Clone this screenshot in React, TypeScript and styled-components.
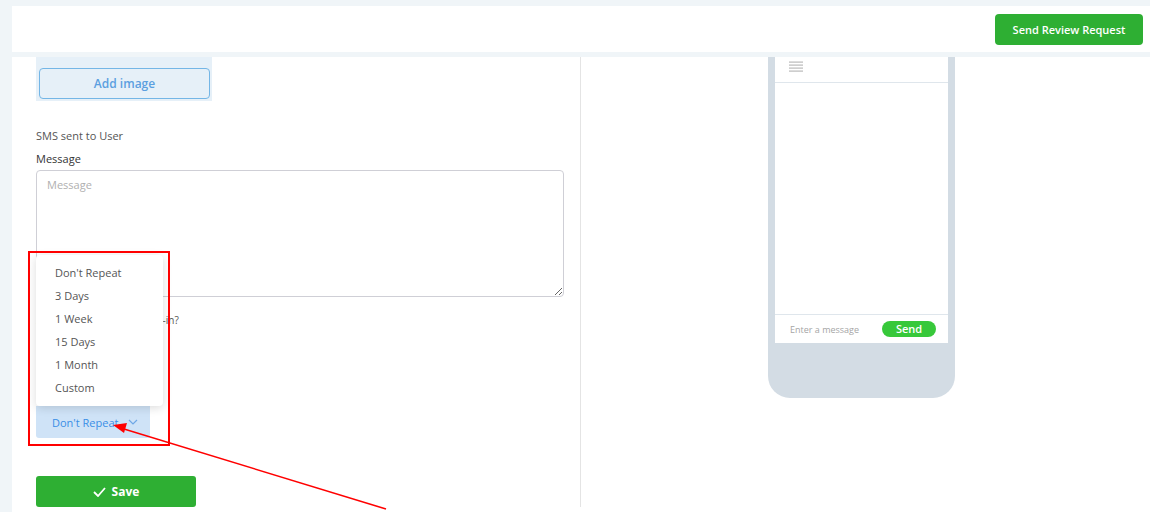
import React from "react";
import styled, { createGlobalStyle } from "styled-components";

const GlobalStyle = createGlobalStyle`
  html, body {
    margin: 0;
    padding: 0;
    height: 512px;
    overflow: hidden;
    background: #f0f5f8;
    font-family: "Open Sans", "Noto Sans", Arial, sans-serif;
  }
  * { box-sizing: border-box; }
`;

const repeatOptions = ["Don't Repeat", "3 Days", "1 Week", "15 Days", "1 Month", "Custom"];

// Review request editor with the repeat dropdown opened and annotated.
const App: React.FC = () => {
  return (
    <Page>
      <GlobalStyle />
      <Header>
        <PrimaryButton>Send Review Request</PrimaryButton>
      </Header>
      <Content>
        <FormColumn>
          <ImageBox>
            <AddImageButton>Add image</AddImageButton>
          </ImageBox>
          <Caption>SMS sent to User</Caption>
          <FieldLabel>Message</FieldLabel>
          <MessageArea placeholder="Message" />
          <Hint>Send only to users who opt-in?</Hint>
          <RepeatWrap>
            <Menu>
              {repeatOptions.map((o) => (
                <MenuItem key={o}>{o}</MenuItem>
              ))}
            </Menu>
            <RepeatButton>
              Don't Repeat
              <svg width="10" height="6" viewBox="0 0 10 6" fill="none">
                <path d="M1 1l4 4 4-4" stroke="#6fa8e6" strokeWidth="1.2" />
              </svg>
            </RepeatButton>
            <Highlight />
          </RepeatWrap>
          <SaveButton>
            <svg width="13" height="10" viewBox="0 0 13 10" fill="none">
              <path d="M1 5l4 4 7-8" stroke="#fff" strokeWidth="1.8" />
            </svg>
            Save
          </SaveButton>
        </FormColumn>
        <PreviewColumn>
          <Phone>
            <Screen>
              <ScreenHeader>
                <svg width="14" height="11" viewBox="0 0 14 11">
                  {[0.5, 3.5, 6.5, 9.5].map((y) => (
                    <rect key={y} x="0" y={y} width="14" height="1.2" fill="#b9b9b9" />
                  ))}
                </svg>
              </ScreenHeader>
              <ScreenBody />
              <ScreenFooter>
                <InputHint>Enter a message</InputHint>
                <SendPill>Send</SendPill>
              </ScreenFooter>
            </Screen>
          </Phone>
        </PreviewColumn>
      </Content>
      <Arrow width="1150" height="512" viewBox="0 0 1150 512">
        <line x1="386" y1="509" x2="124" y2="429" stroke="#f00" strokeWidth="1.5" />
        <polygon points="113,425 127,423 124,433" fill="#f00" />
      </Arrow>
    </Page>
  );
};

const Page = styled.div`
  position: relative;
  height: 512px;
  padding: 6px 0 0 12px;
  display: flex;
  flex-direction: column;
`;

const Header = styled.div`
  height: 46px;
  background: #fff;
  display: flex;
  align-items: center;
  justify-content: flex-end;
  padding-right: 7px;
`;

const PrimaryButton = styled.button`
  width: 148px;
  height: 31px;
  border: none;
  border-radius: 4px;
  background: #2eaf33;
  color: #fff;
  font-family: inherit;
  font-size: 11px;
  font-weight: 600;
  margin-top: 1px;
`;

const Content = styled.div`
  margin-top: 5px;
  flex: 1;
  background: #fff;
  display: flex;
`;

const FormColumn = styled.div`
  width: 569px;
  padding-left: 24px;
  border-right: 1px solid #e4e4e4;
  display: flex;
  flex-direction: column;
  align-items: flex-start;
  margin-bottom: 5px;
`;

const ImageBox = styled.div`
  width: 176px;
  height: 44px;
  background: #e6f0f8;
  padding: 11px 0 0 3px;
`;

const AddImageButton = styled.button`
  width: 171px;
  height: 31px;
  border: 1px solid #74b6e6;
  border-radius: 4px;
  background: #e6f0f8;
  color: #5b9fe0;
  font-family: inherit;
  font-size: 12px;
  font-weight: 600;
`;

const Caption = styled.div`
  margin-top: 27px;
  font-size: 11px;
  color: #555;
  line-height: 16px;
`;

const FieldLabel = styled.div`
  margin-top: 7px;
  font-size: 11px;
  font-weight: 500;
  color: #333;
  line-height: 16px;
`;

const MessageArea = styled.textarea`
  margin-top: 3px;
  width: 528px;
  height: 127px;
  border: 1px solid #cfcfd6;
  border-radius: 4px;
  padding: 6px 10px;
  font-family: inherit;
  font-size: 11px;
  color: #333;
  outline: none;
  &::placeholder {
    color: #b0b0b0;
  }
`;

const Hint = styled.div`
  margin-top: 16px;
  font-size: 10px;
  color: #555;
  line-height: 14px;
`;

const RepeatWrap = styled.div`
  position: relative;
  margin-top: 79px;
`;

const Menu = styled.div`
  position: absolute;
  left: 0;
  bottom: 100%;
  width: 127px;
  padding: 6px 0 7px;
  background: #fff;
  border-radius: 4px;
  box-shadow: 0 2px 10px rgba(0, 0, 0, 0.14);
  z-index: 2;
`;

const MenuItem = styled.div`
  height: 23px;
  line-height: 23px;
  padding-left: 19px;
  font-size: 11px;
  color: #555;
`;

const RepeatButton = styled.button`
  width: 114px;
  height: 32px;
  border: none;
  border-radius: 0 0 3px 3px;
  background: #cfe3f7;
  color: #3a8ee6;
  font-family: inherit;
  font-size: 11px;
  font-weight: 500;
  display: flex;
  align-items: center;
  padding: 0 0 0 16px;
  gap: 10px;
`;

const Highlight = styled.div`
  position: absolute;
  left: -8px;
  top: -155px;
  width: 142px;
  height: 195px;
  border: 2px solid #f00;
  z-index: 3;
  pointer-events: none;
`;

const SaveButton = styled.button`
  margin-top: 38px;
  width: 160px;
  height: 31px;
  border: none;
  border-radius: 3px;
  background: #2eaf33;
  color: #fff;
  font-family: inherit;
  font-size: 12px;
  font-weight: 700;
  display: flex;
  align-items: center;
  justify-content: center;
  gap: 6px;
`;

const PreviewColumn = styled.div`
  flex: 1;
  padding-left: 187px;
`;

const Phone = styled.div`
  width: 187px;
  height: 341px;
  background: #d3dce4;
  border-radius: 0 0 22px 22px;
  padding: 0 7px 55px;
  display: flex;
`;

const Screen = styled.div`
  flex: 1;
  background: #fff;
  display: flex;
  flex-direction: column;
`;

const ScreenHeader = styled.div`
  height: 26px;
  border-bottom: 1px solid #dfe6ec;
  padding: 4px 0 0 14px;
  svg {
    display: block;
  }
`;

const ScreenBody = styled.div`
  flex: 1;
`;

const ScreenFooter = styled.div`
  height: 29px;
  border-top: 1px solid #dfe6ec;
  display: flex;
  align-items: center;
  justify-content: space-between;
  padding: 0 12px 0 15px;
`;

const InputHint = styled.span`
  font-size: 9px;
  color: #a5a5a5;
`;

const SendPill = styled.span`
  width: 54px;
  height: 16px;
  border-radius: 8px;
  background: #37c83a;
  color: #fff;
  font-size: 11px;
  font-weight: 600;
  text-align: center;
  line-height: 16px;
`;

const Arrow = styled.svg`
  position: absolute;
  left: 0;
  top: 0;
  pointer-events: none;
  z-index: 4;
`;

export default App;
